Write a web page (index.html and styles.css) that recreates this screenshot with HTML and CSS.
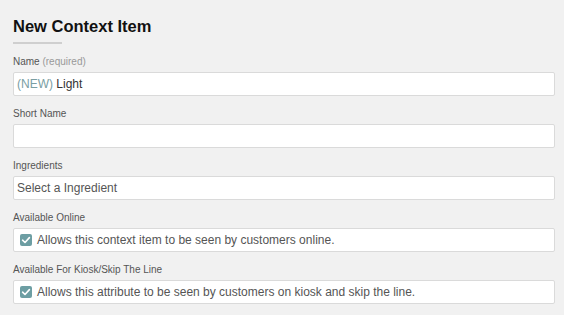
FILE: index.html
```html
<!DOCTYPE html>
<html>
<head>
<meta charset="utf-8">
<link rel="stylesheet" href="styles.css">
</head>
<body>
<div class="page">
  <h1 class="title">New Context Item</h1>
  <div class="rule"></div>
  <div class="field">
    <div class="label">Name <span class="muted">(required)</span></div>
    <div class="box"><span class="new">(NEW)</span>&nbsp;Light</div>
  </div>
  <div class="field">
    <div class="label">Short Name</div>
    <div class="box"></div>
  </div>
  <div class="field">
    <div class="label">Ingredients</div>
    <div class="box placeholder">Select a Ingredient</div>
  </div>
  <div class="field">
    <div class="label">Available Online</div>
    <div class="box check-box"><span class="check"><svg width="12" height="12" viewBox="0 0 12 12"><path d="M2.6 6.2 L5 8.5 L9.4 3.6" fill="none" stroke="#fff" stroke-width="1.6" stroke-linecap="round" stroke-linejoin="round"/></svg></span>Allows this context item to be seen by customers online.</div>
  </div>
  <div class="field">
    <div class="label">Available For Kiosk/Skip The Line</div>
    <div class="box check-box"><span class="check"><svg width="12" height="12" viewBox="0 0 12 12"><path d="M2.6 6.2 L5 8.5 L9.4 3.6" fill="none" stroke="#fff" stroke-width="1.6" stroke-linecap="round" stroke-linejoin="round"/></svg></span>Allows this attribute to be seen by customers on kiosk and skip the line.</div>
  </div>
</div>
</body>
</html>
```

FILE: styles.css
```css
html, body {
  margin: 0;
  padding: 0;
  background: #f1f1f1;
}
body {
  font-family: "Liberation Sans", Arial, sans-serif;
  color: #555;
}
.page {
  padding: 17px 9px 0 13px;
}
.title {
  margin: 0;
  font-size: 16.5px;
  font-weight: bold;
  color: #111;
  line-height: 18px;
}
.rule {
  width: 49px;
  height: 2px;
  background: #cfcfcf;
  margin-top: 7px;
  margin-bottom: 11px;
}
.field {
  margin-bottom: 11px;
}
.label {
  font-size: 10px;
  line-height: 14px;
  color: #555;
  margin-bottom: 3px;
}
.muted {
  color: #999;
}
.box {
  box-sizing: border-box;
  height: 24px;
  background: #fff;
  border: 1px solid #dadada;
  border-radius: 2px;
  padding: 0 3px;
  font-size: 12px;
  line-height: 22px;
  color: #333;
}
.new {
  color: #7a9ea3;
}
.placeholder {
  color: #555;
}
.check-box {
  display: flex;
  align-items: center;
  padding-left: 6px;
  color: #555;
}
.check {
  width: 12px;
  height: 12px;
  background: #6d9ea3;
  border-radius: 2px;
  margin-right: 5px;
  display: flex;
}
```
